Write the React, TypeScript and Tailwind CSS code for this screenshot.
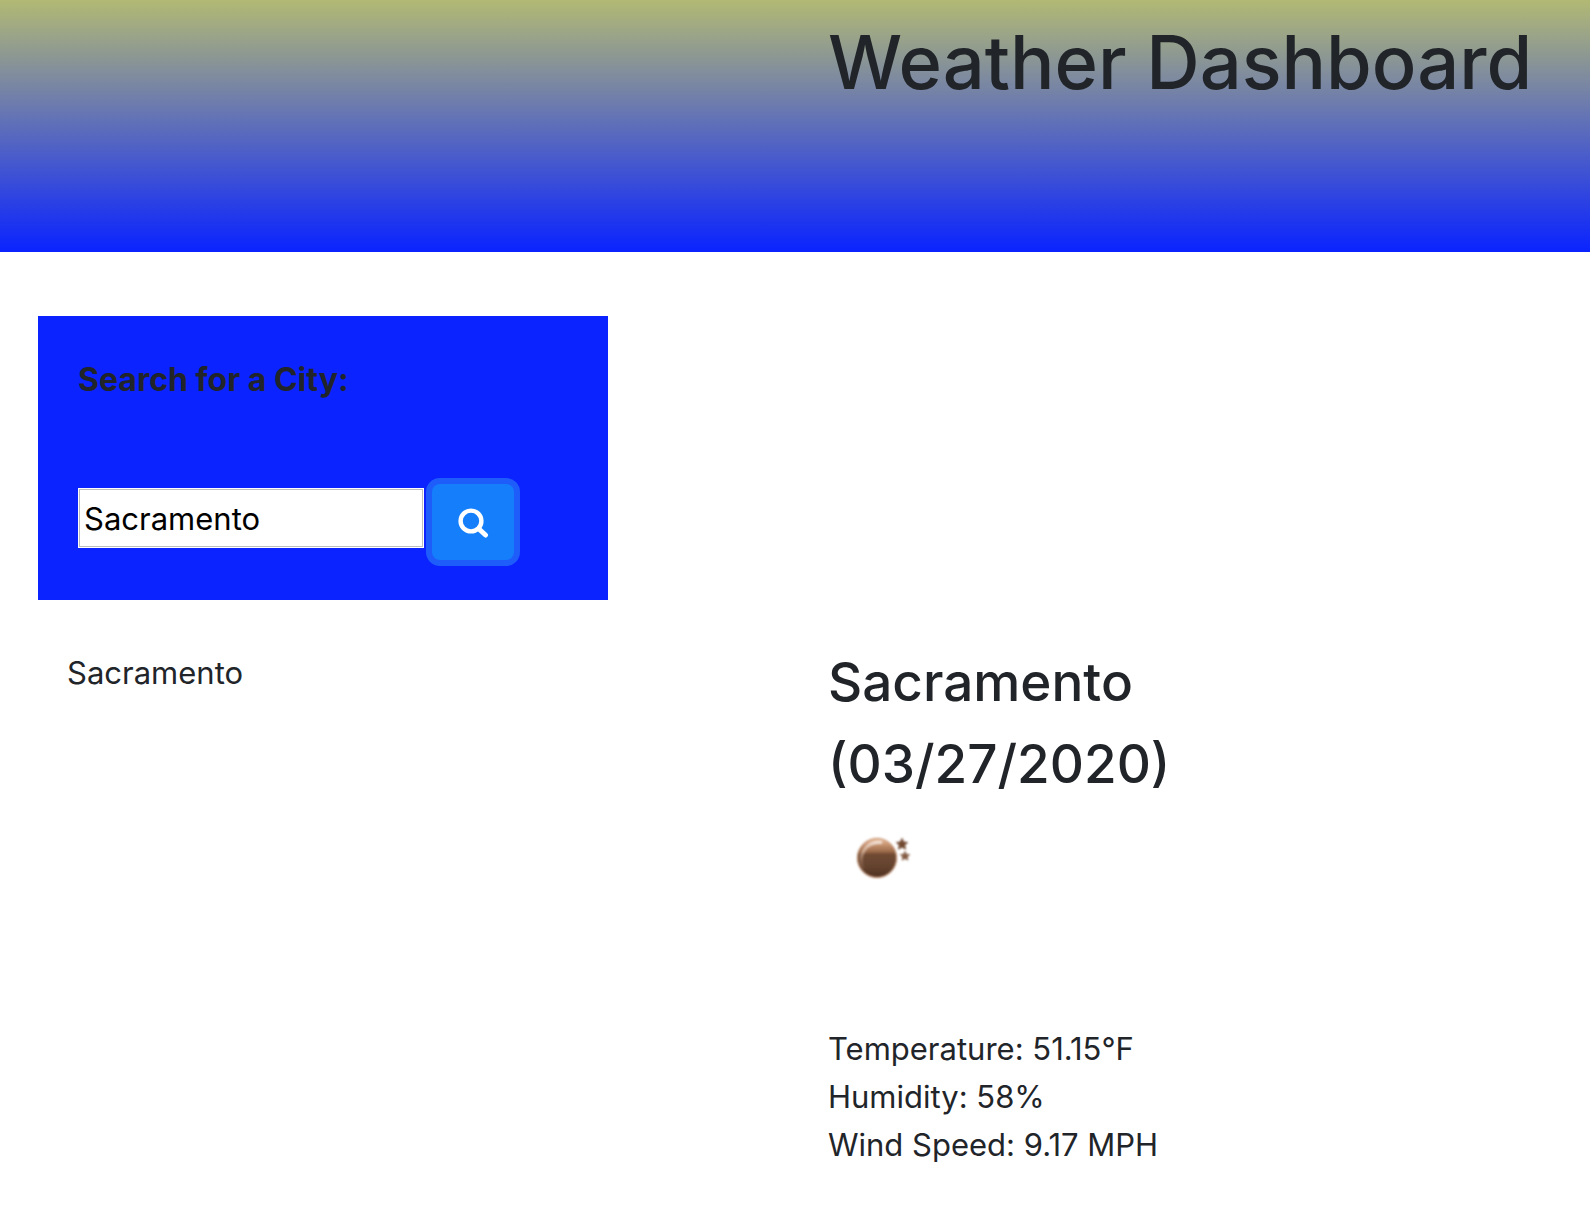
import { useState } from "react";

const readings = ["Temperature: 51.15°F", "Humidity: 58%", "Wind Speed: 9.17 MPH"];

function SearchIcon() {
  return (
    <svg viewBox="0 0 32 32" className="size-8" fill="none" stroke="white" aria-hidden="true">
      <circle cx="14" cy="15" r="10.4" strokeWidth="4.4" />
      <path d="M22.5 23.5 L28.5 29" strokeWidth="5" strokeLinecap="round" />
    </svg>
  );
}

function NightIcon() {
  return (
    <svg viewBox="0 0 100 100" className="size-[100px]" role="img" aria-label="Clear night sky">
      <defs>
        <linearGradient id="moon" x1="0" y1="0" x2="0" y2="1">
          <stop offset="0" stopColor="#efc3a0" />
          <stop offset="0.15" stopColor="#c99572" />
          <stop offset="0.34" stopColor="#9b6a49" />
          <stop offset="0.4" stopColor="#704a33" />
          <stop offset="0.7" stopColor="#65432f" />
          <stop offset="1" stopColor="#4f3223" />
        </linearGradient>
        <linearGradient id="shine" x1="0.6" y1="0" x2="0.1" y2="1">
          <stop offset="0" stopColor="#fff" stopOpacity="0.65" />
          <stop offset="0.5" stopColor="#f3d3bd" stopOpacity="0.55" />
          <stop offset="1" stopColor="#d5a88a" stopOpacity="0.1" />
        </linearGradient>
        <filter id="soft" x="-10%" y="-10%" width="120%" height="120%">
          <feGaussianBlur stdDeviation="0.8" />
        </filter>
      </defs>
      <g filter="url(#soft)">
        <circle cx="49" cy="50" r="19.6" fill="url(#moon)" stroke="#bd8967" strokeWidth="1" />
        <path d="M35 61 C29 47 38 33 54 34.5" fill="none" stroke="url(#shine)" strokeWidth="3" />
        <path d="M74 30.500l1.600 3.600 4 .4-3 2.600.9 4-3.500-2.100-3.500 2.100.9-4-3-2.600 4-.4z" fill="#70472f" stroke="#70472f" />
        <path d="M77 43.500l1.300 2.900 3.200.3-2.400 2.100.7 3.200-2.800-1.700-2.800 1.700.7-3.200-2.400-2.100 3.200-.3z" fill="#835a42" stroke="#835a42" />
      </g>
    </svg>
  );
}

export default function App() {
  const [city, setCity] = useState("Sacramento");

  return (
    <div className="min-h-screen bg-white font-['Inter',sans-serif] text-[31px] leading-[48px] text-[#212529]">
      <header className="grid h-[252px] grid-cols-2 bg-linear-to-b/srgb from-[#b2b974] to-[#0a23ff] pt-[14px]">
        <h1 className="col-start-2 pl-[33px] text-[74px] leading-[96px] font-medium whitespace-nowrap">
          Weather Dashboard
        </h1>
      </header>
      <main>
        <form
          className="mt-16 ml-[38px] h-[284px] max-w-[570px] bg-[#0a23ff] px-10 pt-10"
          onSubmit={(event) => event.preventDefault()}
        >
          <label htmlFor="city" className="block text-[32px] font-bold">
            Search for a City:
          </label>
          <div className="mt-20 flex items-start gap-2">
            <input
              id="city"
              type="text"
              value={city}
              onChange={(event) => setCity(event.target.value)}
              className="mt-1 h-[60px] w-[346px] border border-white bg-white px-[5px] text-black shadow-[inset_0_0_0_1px_#bdbdbd] outline-none"
            />
            <button
              type="submit"
              aria-label="Search"
              className="flex h-[76px] w-[82px] items-center justify-center rounded-lg bg-[#157efb] ring-6 ring-[#1f5dfa]"
            >
              <SearchIcon />
            </button>
          </div>
        </form>
        <div className="grid grid-cols-2">
          <ul className="pt-[49px] pl-[67px]">
            <li>Sacramento</li>
          </ul>
          <section className="pt-[41px] pl-[33px]">
            <h2 className="mb-[3px] text-[53px] leading-[82px] font-medium">
              <span className="block">Sacramento</span>
              <span className="block">(03/27/2020)</span>
            </h2>
            <NightIcon />
            <div className="mt-[117px]">
              {readings.map((reading) => (
                <p key={reading}>{reading}</p>
              ))}
            </div>
          </section>
        </div>
      </main>
    </div>
  );
}
